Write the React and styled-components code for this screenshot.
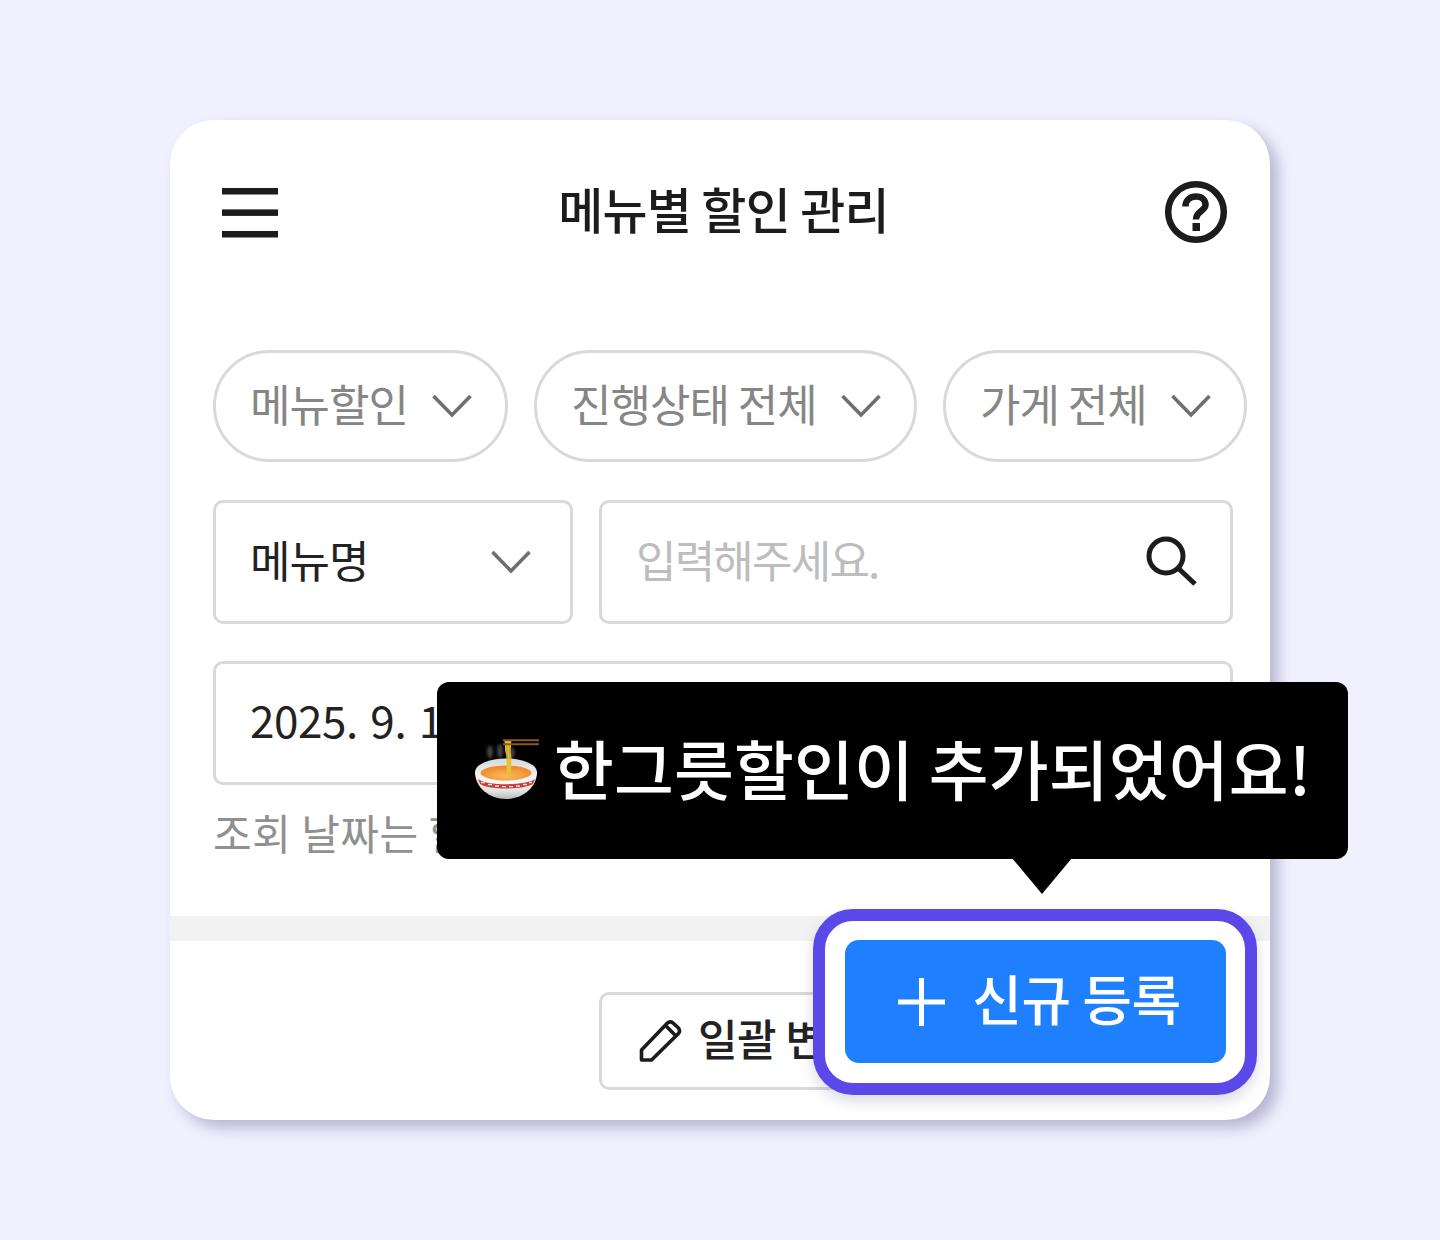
import React from 'react';
import styled, { createGlobalStyle } from 'styled-components';

const GlobalStyle = createGlobalStyle`
  html, body { margin: 0; padding: 0; background: #f0f0ff; }
  * { box-sizing: border-box; }
  body { font-family: "Noto Sans CJK KR", "Noto Sans", sans-serif; }
`;

const Page = styled.div`
  width: 1440px;
  height: 1240px;
  padding: 120px 170px;
  background: #f0f0ff;
`;

const Card = styled.div`
  position: relative;
  width: 1100px;
  height: 1000px;
  background: #fff;
  border-radius: 44px;
  box-shadow: 8px 8px 14px rgba(80, 80, 130, 0.36);
  display: flex;
  flex-direction: column;
`;

const Header = styled.header`
  height: 184px;
  padding: 0 42px 0 52px;
  display: flex;
  align-items: center;
  justify-content: space-between;
`;

const Title = styled.h1`
  margin: 0 0 8px 4px;
  font-size: 49px;
  line-height: 64px;
  font-weight: 500;
  letter-spacing: -0.8px;
  color: #1c1c1c;
`;

const Filters = styled.div`
  padding: 46px 0 0 43px;
  display: flex;
  flex-direction: column;
`;

const ChipRow = styled.div`
  display: flex;
  gap: 26px;
`;

const Chip = styled.div`
  height: 112px;
  width: ${p => p.$w}px;
  padding: 0 33px 0 34px;
  border: 3px solid #d9d9d9;
  border-radius: 56px;
  display: flex;
  align-items: center;
  justify-content: space-between;
  font-size: 44px;
  letter-spacing: -1px;
  color: #868686;
`;

const FieldRow = styled.div`
  display: flex;
  gap: 26px;
  margin-top: ${p => p.$top}px;
`;

const Field = styled.div`
  height: 124px;
  width: ${p => p.$w}px;
  padding: 0 ${p => p.$pr || 34}px 0 34px;
  border: 3px solid #d9d9d9;
  border-radius: 10px;
  display: flex;
  align-items: center;
  justify-content: space-between;
  font-size: 44px;
  letter-spacing: ${p => (p.$muted ? -1.8 : -1)}px;
  white-space: nowrap;
  color: ${p => (p.$muted ? '#bdbdbd' : '#222')};
`;

const Label = styled.span`
  margin-bottom: ${p => p.$lift || 6}px;
`;

const DateText = styled(Label)`
  letter-spacing: -0.4px;
  word-spacing: 3px;
`;

const Note = styled.p`
  margin: 17px 0 0;
  font-size: 42px;
  line-height: 60px;
  letter-spacing: 0.5px;
  white-space: nowrap;
  color: #909090;
`;

const Divider = styled.div`
  height: 25px;
  margin-top: 54px;
  background: #f2f2f2;
`;

const Footer = styled.div`
  padding: 51px 0 0 429px;
`;

const BulkButton = styled.div`
  width: 360px;
  height: 98px;
  padding-left: 37px;
  border: 3px solid #d9d9d9;
  border-radius: 10px;
  display: flex;
  align-items: center;
  gap: 16px;
  font-size: 43px;
  font-weight: 500;
  letter-spacing: -0.5px;
  color: #222;
`;

const Highlight = styled.div`
  position: absolute;
  left: 643px;
  top: 789px;
  width: 444px;
  height: 186px;
  padding: 19px 0 0 20px;
  border: 12px solid #5b48e8;
  border-radius: 40px;
  background: #fff;
  box-shadow: 0 6px 14px rgba(70, 70, 110, 0.2);
`;

const PrimaryButton = styled.div`
  width: 381px;
  height: 123px;
  padding-left: 8px;
  background: #1e7fff;
  border-radius: 14px;
  display: flex;
  align-items: center;
  justify-content: center;
  gap: 26px;
  font-size: 54px;
  font-weight: 500;
  letter-spacing: -0.5px;
  color: #fff;
`;

const Tooltip = styled.div`
  position: absolute;
  left: 267px;
  top: 562px;
  width: 911px;
  height: 177px;
  background: #000;
  border-radius: 12px;
  display: flex;
  align-items: center;
  padding: 0 0 4px 38px;
  gap: 15px;
  font-size: 65px;
  font-weight: 500;
  letter-spacing: 0.2px;
  color: #fff;
  white-space: nowrap;
  &::after {
    content: '';
    position: absolute;
    left: 575px;
    top: 176px;
    border-left: 30px solid transparent;
    border-right: 30px solid transparent;
    border-top: 36px solid #000;
  }
`;

const Chevron = () => (
  <svg width="40" height="24" viewBox="0 0 40 24" fill="none" stroke="#6f6f6f" strokeWidth="3.6">
    <path d="M1.5 2 L20 21 L38.5 2" />
  </svg>
);

const MenuIcon = () => (
  <svg width="57" height="52" viewBox="0 0 57 52" fill="#1c1c1c">
    <rect x="0" y="2" width="56" height="6.5" />
    <rect x="0" y="23.4" width="56" height="6.5" />
    <rect x="0" y="45" width="56" height="6.5" />
  </svg>
);

const HelpIcon = () => (
  <svg width="64" height="64" viewBox="0 0 64 64" fill="none" stroke="#1c1c1c" strokeWidth="6.5">
    <circle cx="32" cy="32" r="27.8" />
    <path d="M21.5 26.5 C21.5 20 26 16.5 32 16.5 C38 16.5 41.5 20 41.5 25 C41.5 31 32 31 32 39.5" />
    <rect x="28.5" y="43" width="7.5" height="8" fill="#1c1c1c" stroke="none" />
  </svg>
);

const SearchIcon = () => (
  <svg width="52" height="52" viewBox="0 0 52 52" fill="none" stroke="#1c1c1c" strokeWidth="5">
    <circle cx="20" cy="20" r="17" />
    <path d="M32 32 L49 48" />
  </svg>
);

const PencilIcon = () => (
  <svg width="43" height="42" viewBox="0 0 43 42" fill="none" stroke="#1c1c1c" strokeWidth="3.6" strokeLinejoin="round">
    <path d="M2.5 30 L28 3.5 C30 1.5 32 1.5 34 3 L39 7.5 C41 9.5 41 11.5 39.5 13.5 L12.5 40 L2.5 40 Z" />
    <path d="M27 6 L37 16" />
  </svg>
);

const PlusIcon = () => (
  <svg width="48" height="48" viewBox="0 0 48 48" fill="#fff">
    <rect x="0" y="21.5" width="47" height="5" />
    <rect x="21" y="0" width="5" height="48" />
  </svg>
);

const RamenEmoji = () => (
  <svg width="64" height="60" viewBox="0 0 64 60">
    <defs>
      <linearGradient id="bowl" x1="0" y1="0" x2="0" y2="1">
        <stop offset="0" stopColor="#f4f4f4" />
        <stop offset="0.7" stopColor="#e4e4e4" />
        <stop offset="1" stopColor="#b9b9b9" />
      </linearGradient>
      <linearGradient id="rim" x1="0" y1="0" x2="0" y2="1">
        <stop offset="0" stopColor="#d8d8d8" />
        <stop offset="1" stopColor="#ffffff" />
      </linearGradient>
      <radialGradient id="soup" cx="0.5" cy="0.7" r="0.6">
        <stop offset="0" stopColor="#f9bb5c" />
        <stop offset="1" stopColor="#ef8a2c" />
      </radialGradient>
      <filter id="steam"><feGaussianBlur stdDeviation="1.5" /></filter>
    </defs>
    <g filter="url(#steam)" fill="#6a6a6a" opacity="0.65">
      <ellipse cx="15" cy="13" rx="3" ry="6.5" />
      <ellipse cx="25" cy="12" rx="3" ry="7" />
      <ellipse cx="37" cy="14" rx="2.5" ry="6" />
    </g>
    <path d="M0 33 C0 48 14 60 31 60 C48 60 62 48 62 33 Z" fill="url(#bowl)" />
    <ellipse cx="31" cy="33" rx="31" ry="13.5" fill="url(#rim)" />
    <ellipse cx="31" cy="34" rx="25.5" ry="7.5" fill="url(#soup)" />
    <path d="M3 40 C12 47 50 47 60 40 L58 45 C48 51 14 51 5 45 Z" fill="#cf3b36" />
    <path d="M6 43.5 H10 M13 45.5 H17 M20 47 H24 M27 47.6 H31 M34 47.6 H38 M41 47 H45 M48 45.5 H52 M54 43.5 H57"
      stroke="#f7e3df" strokeWidth="1.3" />
    <path d="M29 1 C31 7 29 10 31 15 C32 21 31 28 32 36 L36 36 C36 28 37 21 36 15 C35 10 37 6 36 1 Z" fill="#e6c13c" />
    <path d="M31 4 C33 10 31 14 33 20 M34 4 C36 10 34 14 35 20" stroke="#b88f1e" strokeWidth="0.9" fill="none" />
    <path d="M28 1.2 H64 M28 5.2 H64" stroke="#8a5a1c" strokeWidth="1.9" />
  </svg>
);

export default function App() {
  return (
    <>
      <GlobalStyle />
      <Page>
        <Card>
          <Header>
            <MenuIcon />
            <Title>메뉴별 할인 관리</Title>
            <HelpIcon />
          </Header>
          <Filters>
            <ChipRow>
              <Chip $w={295}><Label>메뉴할인</Label><Chevron /></Chip>
              <Chip $w={383}><Label>진행상태 전체</Label><Chevron /></Chip>
              <Chip $w={304}><Label>가게 전체</Label><Chevron /></Chip>
            </ChipRow>
            <FieldRow $top={38}>
              <Field $w={360} $pr={39}><Label>메뉴명</Label><Chevron /></Field>
              <Field $w={634} $pr={32} $muted><Label>입력해주세요.</Label><SearchIcon /></Field>
            </FieldRow>
            <FieldRow $top={37}>
              <Field $w={1020}><DateText $lift={8}>2025. 9. 1 ~ 2025. 9. 30</DateText></Field>
            </FieldRow>
            <Note>조회 날짜는 할인 시작일 기준입니다.</Note>
          </Filters>
          <Divider />
          <Footer>
            <BulkButton><PencilIcon /><Label $lift={8}>일괄 변경</Label></BulkButton>
          </Footer>
          <Tooltip>
            <RamenEmoji />
            <Label $lift={4}>한그릇할인이 추가되었어요!</Label>
          </Tooltip>
          <Highlight>
            <PrimaryButton><PlusIcon /><Label $lift={8}>신규 등록</Label></PrimaryButton>
          </Highlight>
        </Card>
      </Page>
    </>
  );
}
